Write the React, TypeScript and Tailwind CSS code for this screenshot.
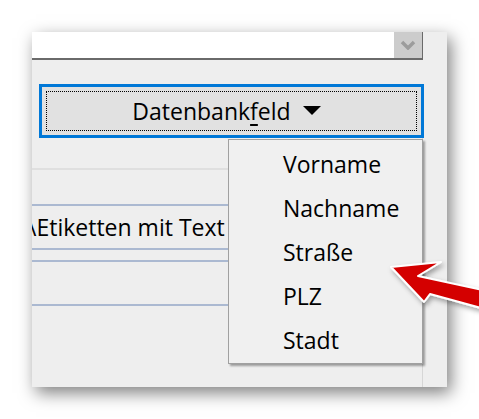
const fields = ["Vorname", "Nachname", "Straße", "PLZ", "Stadt"];

const RedArrow = () => (
  <svg
    className="absolute left-0 top-0 pointer-events-none"
    width={479}
    height={419}
    viewBox="0 0 479 419"
  >
    <defs>
      <filter id="arrowShadow" x="-20%" y="-20%" width="140%" height="140%">
        <feDropShadow dx="2" dy="3" stdDeviation="2.5" floodColor="#000" floodOpacity="0.35" />
      </filter>
    </defs>
    <polygon
      points="391,267 441,262 418,276 492,292 492,311 430,294 424,302"
      fill="#d40000"
      stroke="#ffffff"
      strokeWidth={2}
      strokeLinejoin="round"
      filter="url(#arrowShadow)"
    />
  </svg>
);

export default function App() {
  return (
    <div className="relative w-[479px] h-[419px] overflow-hidden bg-white font-['Segoe_UI','Open_Sans',sans-serif] text-black">
      <div className="pl-[32px] pt-[32px]">
        <div className="relative w-[415px] h-[355px] bg-[#eeeeee] shadow-[4px_6px_16px_rgba(0,0,0,0.5)] flex">
          {/* left column */}
          <div className="w-[391px] flex flex-col">
            {/* combo box, top is cut off */}
            <div className="h-[28px] bg-white border-r border-b-2 border-[#6a6a6a] flex justify-end">
              <div className="w-[28px] h-full bg-[#cccccc] flex items-center justify-center">
                <svg width="16" height="10" viewBox="0 0 16 10">
                  <polyline
                    points="2,2 8,8 14,2"
                    fill="none"
                    stroke="#9c9c9c"
                    strokeWidth={3.5}
                  />
                </svg>
              </div>
            </div>

            {/* focused button */}
            <div className="mt-[24px] ml-[7px] w-[385px] h-[54px] border-[3px] border-[#0078d7] bg-[#e1e1e1] p-[4px]">
              <div className="h-full border border-dotted border-black flex items-center justify-center pr-[10px]">
                <span className="text-[23px] leading-none">
                  Datenbank<span className="underline underline-offset-[4px]">f</span>eld
                </span>
                <svg width="18" height="10" viewBox="0 0 18 10" className="ml-[12px]">
                  <polygon points="0,0 18,0 9,9" fill="#000" />
                </svg>
              </div>
            </div>

            {/* list area */}
            <div className="flex-1 border-r border-[#d6d6d6]">
              <div className="mt-[30px] h-[2px] bg-[#dfdfdf]" />
              <div className="mt-[34px] h-[2px] bg-[#abb9d1]" />
              <div className="h-[42px] overflow-hidden flex items-center">
                <span className="ml-[-4px] text-[23px] leading-none whitespace-nowrap">
                  \Etiketten mit Text
                </span>
              </div>
              <div className="h-[2px] bg-[#abb9d1]" />
              <div className="mt-[10px] h-[2px] bg-[#abb9d1]" />
              <div className="mt-[42px] h-[2px] bg-[#abb9d1]" />
            </div>
          </div>

          {/* right strip */}
          <div className="flex-1" />

          {/* popup menu */}
          <div className="absolute left-[196px] top-[107px] w-[195px] h-[225px] bg-[#f0f0f0] border border-[#a0a0a0] shadow-[2px_2px_2px_rgba(0,0,0,0.35)] py-[2px]">
            {fields.map((f) => (
              <div key={f} className="h-[44px] flex items-center pl-[54px] text-[23px] leading-none">
                {f}
              </div>
            ))}
          </div>
        </div>
      </div>

      <RedArrow />
    </div>
  );
}
